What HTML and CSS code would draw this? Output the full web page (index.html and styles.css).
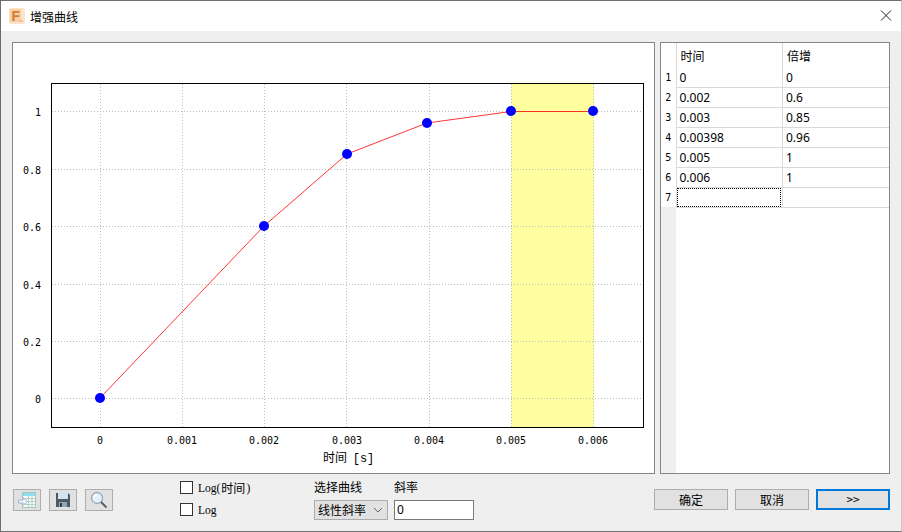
FILE: index.html
```html
<!DOCTYPE html>
<html lang="zh-CN">
<head>
    <meta charset="UTF-8">
    <title>增强曲线</title>
    <link rel="stylesheet" href="styles.css">
</head>
<body>

<div class="window">
    <div class="titlebar">
        <svg class="app-icon" width="16" height="16" viewBox="0 0 16 16">
            <rect width="16" height="16" rx="2" fill="#fde3ca"/>
            <rect x="1" y="1" width="11" height="13" fill="#f9cfa4"/>
            <text x="2.5" y="12.5" class="app-letter">F</text>
            <rect x="9" y="12" width="5" height="2" fill="#f7c39a"/>
        </svg>
        <span class="title">增强曲线</span>
        <svg class="close" width="12" height="12" viewBox="0 0 12 12">
            <path d="M1 0.5 L11 10.5 M11 0.5 L1 10.5" stroke="#222" stroke-width="1" fill="none"/>
        </svg>
    </div>

    <div class="content">
        <div class="panels">
            <div class="panel chart">
                <svg class="plot" width="641" height="430" viewBox="13 43 641 430">
                    <rect class="band" x="511" y="84" width="83" height="343"/>

                    <g class="grid">
                        <line x1="100.5" y1="84" x2="100.5" y2="427"/>
                        <line x1="182.5" y1="84" x2="182.5" y2="427"/>
                        <line x1="264.5" y1="84" x2="264.5" y2="427"/>
                        <line x1="346.5" y1="84" x2="346.5" y2="427"/>
                        <line x1="429.5" y1="84" x2="429.5" y2="427"/>
                        <line x1="511.5" y1="84" x2="511.5" y2="427"/>
                        <line x1="593.5" y1="84" x2="593.5" y2="427"/>
                        <line x1="52" y1="111.5" x2="643" y2="111.5"/>
                        <line x1="52" y1="169.5" x2="643" y2="169.5"/>
                        <line x1="52" y1="226.5" x2="643" y2="226.5"/>
                        <line x1="52" y1="284.5" x2="643" y2="284.5"/>
                        <line x1="52" y1="341.5" x2="643" y2="341.5"/>
                        <line x1="52" y1="398.5" x2="643" y2="398.5"/>
                    </g>

                    <rect class="frame" x="51.5" y="83.5" width="592" height="344"/>

                    <polyline class="curve" points="100,398 264,226 347,154 427,123 511,111.5 593,111.5"/>

                    <g class="dots">
                        <circle cx="100" cy="398" r="5"/>
                        <circle cx="264" cy="226" r="5"/>
                        <circle cx="347" cy="154" r="5"/>
                        <circle cx="427" cy="123" r="5"/>
                        <circle cx="511" cy="111" r="5"/>
                        <circle cx="593" cy="111" r="5"/>
                    </g>

                    <g class="ticks ticks-y">
                        <text x="41" y="116">1</text>
                        <text x="41" y="174">0.8</text>
                        <text x="41" y="231">0.6</text>
                        <text x="41" y="289">0.4</text>
                        <text x="41" y="346">0.2</text>
                        <text x="41" y="403">0</text>
                    </g>
                    <g class="ticks ticks-x">
                        <text x="100" y="444">0</text>
                        <text x="182" y="444">0.001</text>
                        <text x="264" y="444">0.002</text>
                        <text x="347" y="444">0.003</text>
                        <text x="429" y="444">0.004</text>
                        <text x="511" y="444">0.005</text>
                        <text x="593" y="444">0.006</text>
                    </g>
                    <text class="axis-title" x="323" y="462">时间 <tspan class="axis-unit" dx="3">[s]</tspan></text>
                </svg>
            </div>

            <div class="panel sheet">
                <table class="grid-table">
                    <tr>
                        <th class="corner"></th>
                        <th>时间</th>
                        <th>倍增</th>
                    </tr>
                    <tr><td class="num">1</td><td>0</td><td>0</td></tr>
                    <tr><td class="num">2</td><td>0.002</td><td>0.6</td></tr>
                    <tr><td class="num">3</td><td>0.003</td><td>0.85</td></tr>
                    <tr><td class="num">4</td><td>0.00398</td><td>0.96</td></tr>
                    <tr><td class="num">5</td><td>0.005</td><td>1</td></tr>
                    <tr><td class="num">6</td><td>0.006</td><td>1</td></tr>
                    <tr><td class="num">7</td><td class="current"><div class="focus-box"></div></td><td></td></tr>
                </table>
            </div>
        </div>

        <div class="footer">
            <div class="tools">
                <button class="tool" title="导入">
                    <svg width="20" height="18" viewBox="0 0 20 18">
                        <rect x="5.5" y="1.5" width="13" height="15" fill="#f6fbf8" stroke="#a9c4bd"/>
                        <rect x="6" y="2" width="12" height="3" fill="#8fdcf5"/>
                        <path d="M8 7.5 H18 M8 10.5 H18 M8 13.5 H18 M11.5 5 V16 M15 5 V16" stroke="#b3cfc6" fill="none"/>
                        <path d="M1.5 9 H6 V6.5 L10.5 10.5 L6 14.5 V12 H1.5 Z" fill="#eef6ff" stroke="#9db4c9"/>
                    </svg>
                </button>
                <button class="tool" title="保存">
                    <svg width="16" height="16" viewBox="0 0 16 16">
                        <path d="M1 1 H13 L15 3 V15 H1 Z" fill="#4b5a66"/>
                        <rect x="3" y="1" width="10" height="6" fill="#d4e2ee"/>
                        <rect x="4" y="10" width="8" height="5" fill="#9aa4ac"/>
                        <rect x="5" y="11" width="2" height="4" fill="#333d44"/>
                    </svg>
                </button>
                <button class="tool" title="查看">
                    <svg width="18" height="18" viewBox="0 0 18 18">
                        <circle cx="7" cy="7" r="5.5" fill="#e3f0fb" stroke="#98a7b5" stroke-width="1.3"/>
                        <path d="M4 6 A3.5 3.5 0 0 1 7 3.5" stroke="#fff" stroke-width="1.4" fill="none"/>
                        <path d="M11 11 L16.5 16.5" stroke="#555f68" stroke-width="2"/>
                    </svg>
                </button>
            </div>

            <div class="checks">
                <label class="check"><span class="box"></span>Log(<span class="cjk">时间</span>)</label>
                <label class="check"><span class="box"></span>Log</label>
            </div>

            <div class="field curve-field">
                <span class="field-label">选择曲线</span>
                <div class="select">线性斜率
                    <svg class="chevron" width="10" height="6" viewBox="0 0 10 6">
                        <path d="M1 1 L5 5 L9 1" stroke="#666" fill="none"/>
                    </svg>
                </div>
            </div>

            <div class="field">
                <span class="field-label">斜率</span>
                <div class="slope-input">0</div>
            </div>

            <div class="actions">
                <button class="btn">确定</button>
                <button class="btn">取消</button>
                <button class="btn primary">&gt;&gt;</button>
            </div>
        </div>
    </div>
</div>

</body>
</html>
```

FILE: styles.css
```css
body {
    margin: 0;
    width: 902px;
    height: 532px;
    overflow: hidden;
    background: #f4f4f4;
    font-family: "Noto Sans", "Noto Sans CJK SC", sans-serif;
    font-size: 12px;
    color: #000;
}

.window {
    width: 900px;
    height: 530px;
    border: 1px solid #6e6e6e;
    border-right-color: #c8c8c8;
    display: flex;
    flex-direction: column;
}

.titlebar {
    height: 30px;
    flex: none;
    background: #fff;
    display: flex;
    align-items: center;
    padding-left: 8px;
    padding-right: 9px;
}

.app-icon {
    margin-right: 5px;
}

.app-letter {
    font-family: "Liberation Sans", sans-serif;
    font-size: 14px;
    font-weight: bold;
    fill: #cf7e38;
}

.title {
    font-family: "Noto Sans CJK SC", sans-serif;
    font-size: 12px;
}

.close {
    margin-left: auto;
}

.content {
    flex: 1;
    background: #efefef;
    padding: 11px 11px 0 11px;
    display: flex;
    flex-direction: column;
}

.panels {
    display: flex;
    gap: 5px;
    height: 432px;
    flex: none;
}

.panel {
    background: #fff;
    border: 1px solid #858585;
    height: 432px;
    box-sizing: border-box;
}

.chart {
    width: 643px;
}

.sheet {
    width: 230px;
    background: linear-gradient(to right, #efefef 15px, #fff 15px);
}

/* plot */
.plot {
    display: block;
}

.band {
    fill: #ffffa0;
}

.grid line {
    stroke: #bdbdbd;
    stroke-width: 1;
    stroke-dasharray: 1 2;
    shape-rendering: crispEdges;
}

.frame {
    fill: none;
    stroke: #000;
    stroke-width: 1;
    shape-rendering: crispEdges;
}

.curve {
    fill: none;
    stroke: #f00;
    stroke-width: 0.8;
}

.dots circle {
    fill: #00f;
}

.ticks text {
    font-family: "DejaVu Sans Mono", monospace;
    font-size: 10px;
    fill: #000;
}

.ticks-y text {
    text-anchor: end;
}

.ticks-x text {
    text-anchor: middle;
}

.axis-title {
    font-family: "Noto Sans CJK SC", sans-serif;
    font-size: 12px;
}

.axis-unit {
    font-family: "Liberation Mono", monospace;
}

/* data table */
.grid-table {
    border-collapse: collapse;
    table-layout: fixed;
    width: 228px;
    font-size: 12px;
}

.grid-table th {
    height: 24px;
    padding: 0 0 0 4px;
    text-align: left;
    font-weight: normal;
    font-family: "Noto Sans CJK SC", sans-serif;
    background: #fff;
    border-left: 1px solid #d9d9d9;
    box-sizing: border-box;
}

.grid-table th.corner {
    width: 15px;
    padding: 0;
    border-left: 0;
}

.grid-table td {
    height: 20px;
    padding: 2px 0 0 3px;
    line-height: 14px;
    background: #fff;
    border-left: 1px solid #d9d9d9;
    border-bottom: 1px solid #d9d9d9;
    box-sizing: border-box;
}

.grid-table td.num {
    padding: 2px 0 0 0;
    text-align: center;
    font-family: "DejaVu Sans Mono", monospace;
    font-size: 10px;
    border-left: 0;
    border-bottom: 0;
}

.grid-table td.current {
    padding: 0;
}

.focus-box {
    height: 19px;
    margin: 0 1px 0 0;
    border: 1px dotted #000;
    box-sizing: border-box;
}

/* bottom strip */
.footer {
    display: flex;
    align-items: flex-start;
    flex: 1;
}

.tools {
    display: flex;
    gap: 8px;
    margin: 15px 0 0 1px;
}

button {
    font-family: inherit;
    font-size: 12px;
    padding: 0;
    background: #e1e1e1;
    border: 1px solid #adadad;
    color: #000;
}

.tool {
    width: 28px;
    height: 22px;
    display: flex;
    align-items: center;
    justify-content: center;
}

.checks {
    margin: 7px 0 0 67px;
    width: 134px;
    display: flex;
    flex-direction: column;
    gap: 9px;
}

.check {
    display: flex;
    align-items: center;
    height: 13px;
    font-family: "Liberation Serif", serif;
    font-size: 11.5px;
}

.box {
    width: 13px;
    height: 13px;
    box-sizing: border-box;
    background: #fff;
    border: 1px solid #333;
    margin-right: 5px;
}

.cjk {
    font-family: "Noto Sans CJK SC", sans-serif;
    font-size: 12px;
    margin: 0 1px;
}

.field {
    display: flex;
    flex-direction: column;
    margin-top: 5px;
}

.curve-field {
    margin-right: 6px;
}

.field-label {
    height: 21px;
    line-height: 16px;
    font-family: "Noto Sans CJK SC", sans-serif;
}

.select {
    width: 74px;
    height: 20px;
    box-sizing: border-box;
    background: #e1e1e1;
    border: 1px solid #adadad;
    padding-left: 3px;
    font-family: "Noto Sans CJK SC", sans-serif;
    line-height: 18px;
    display: flex;
    align-items: center;
    justify-content: space-between;
    padding-right: 4px;
}

.slope-input {
    width: 80px;
    height: 20px;
    box-sizing: border-box;
    background: #fff;
    border: 1px solid #7a7a7a;
    padding-left: 2px;
    line-height: 18px;
}

.actions {
    margin-left: auto;
    display: flex;
    gap: 7px;
    margin-top: 15px;
}

.btn {
    width: 74px;
    height: 21px;
    font-family: "Noto Sans CJK SC", sans-serif;
    line-height: 17px;
}

.btn.primary {
    border: 2px solid #0078d7;
    font-family: "DejaVu Sans Mono", monospace;
    font-size: 11px;
}
```
